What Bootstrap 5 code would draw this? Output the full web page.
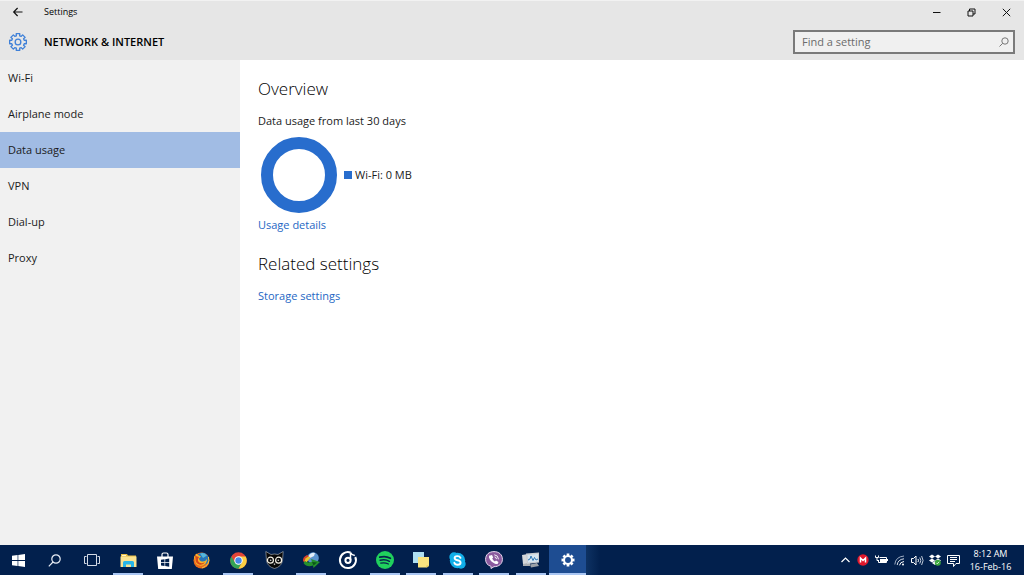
<!DOCTYPE html>
<html lang="en">
<head>
<meta charset="utf-8">
<meta name="viewport" content="width=device-width, initial-scale=1">
<title>Settings</title>
<link href="https://cdn.jsdelivr.net/npm/bootstrap@5.3.0/dist/css/bootstrap.min.css" rel="stylesheet">
<style>
  body { font-family: "Open Sans", "Noto Sans", sans-serif; font-size: 11px; line-height: 16px; color: #1b1b1b; background: #fff; }
  svg { display: block; overflow: visible; }
  button { border: 0; padding: 0; background: transparent; color: inherit; }
  .app-head { background: #e6e6e6; box-shadow: inset 0 1px #f2f2f2; }
  .caption-row { height: 24px; }
  .caption-text { font-size: 9px; color: #000; }
  .back-btn { width: 36px; height: 24px; }
  .win-btn { width: 35px; height: 24px; }
  .title-row { height: 36px; padding-right: 9px; }
  .gear-cell { width: 44px; padding-left: 9px; }
  .page-name { font-size: 11px; line-height: 16px; font-weight: 600; color: #000; }
  .search-box { width: 222px; height: 24px; border: 2px solid #7a7a7a; background: #f0f0f0; }
  .search-box input { border: 0; background: transparent; outline: 0; padding: 0 0 0 7px; color: #666; min-width: 0; }
  .search-box input::placeholder { color: #6b6b6b; opacity: 1; }
  .search-box button { width: 18px; }
  .side { width: 240px; background: #f1f1f1; }
  .side .nav-link { height: 36px; padding: 10px 8px; color: #1b1b1b; }
  .side .nav-link.active { background: #a1bce4; }
  .content { padding: 17px 18px; }
  .content h2 { font-size: 17px; line-height: 24px; font-weight: 300; margin: 0; color: #000; }
  .content section { margin-bottom: 19px; }
  .content a { color: #2567c4; text-decoration: none; }
  .ring { width: 76px; height: 76px; border: 12px solid #286dcd; margin-left: 3px; }
  .key { width: 8px; height: 8px; background: #286dcd; margin: 0 3px 0 7px; }
  .taskbar { height: 30px; background: #02204d; color: #fff; }
  .apps { display: grid; grid-template-columns: repeat(16, 1fr); width: 586px; }
  .apps button { display: flex; align-items: center; justify-content: center; border-bottom: 2px solid transparent; border-top: 2px solid transparent; }
  .apps .running { background: linear-gradient(#a9c6f3, #a9c6f3) center bottom / 30px 2px no-repeat border-box; }
  .apps .current { background: #1e4d92; border-bottom-color: #a9c6f3; border-top-color: #1e4d92; }
  .glow { width: 14px; background: linear-gradient(90deg, #0e3263, #02204d); }
  .tray button { width: 18px; display: flex; align-items: center; justify-content: center; }
  .tray .clock { width: 57px; font-size: 9px; line-height: 13px; white-space: nowrap; }
  .peek { width: 5px; }
</style>
</head>
<body class="vh-100 d-flex flex-column overflow-hidden">

<header class="app-head flex-shrink-0">
  <div class="caption-row d-flex align-items-center">
    <button class="back-btn d-flex align-items-center justify-content-center" aria-label="Back">
      <svg width="10" height="10" viewBox="0 0 10 10" fill="none" stroke="#111" stroke-width="1.2"><path d="M9.5 5H.8M4.600 1 .7 5l3.900 4"/></svg>
    </button>
    <span class="caption-text ms-2">Settings</span>
    <div class="d-flex ms-auto">
      <button class="win-btn d-flex align-items-center justify-content-center" aria-label="Minimize"><svg width="9" height="9" viewBox="0 0 9 9" stroke="#111"><path d="M1 4.500h7.500"/></svg></button>
      <button class="win-btn d-flex align-items-center justify-content-center" aria-label="Restore"><svg width="9" height="9" viewBox="0 0 9 9" fill="none" stroke="#111"><path d="M1 3h5v5H1zM2.500 3V1h5.500v5H6"/></svg></button>
      <button class="win-btn d-flex align-items-center justify-content-center" aria-label="Close"><svg width="9" height="9" viewBox="0 0 9 9" stroke="#111"><path d="m.8.8 7.400 7.400M8.200.8.8 8.200"/></svg></button>
    </div>
  </div>
  <div class="title-row d-flex align-items-center">
    <div class="gear-cell">
      <svg width="18" height="18" viewBox="-9.500 -9.500 19 19" fill="none" stroke="#3f80d8" stroke-width="1.400" stroke-linejoin="round"><path d="M6.570-1.760 8.800-1.870V1.870L6.570 1.760 5.890 3.400 7.550 4.900 4.900 7.550 3.400 5.890 1.760 6.570 1.870 8.800H-1.870L-1.760 6.570-3.400 5.890-4.900 7.550-7.550 4.900-5.890 3.400-6.570 1.760-8.800 1.870V-1.870L-6.570-1.760-5.890-3.400-7.550-4.900-4.900-7.550-3.400-5.890-1.760-6.570-1.870-8.800H1.870L1.760-6.570 3.400-5.890 4.900-7.550 7.550-4.900 5.890-3.400Z"/><circle r="3"/></svg>
    </div>
    <h1 class="page-name m-0">NETWORK &amp; INTERNET</h1>
    <form class="search-box d-flex ms-auto" role="search" onsubmit="return false">
      <input class="flex-grow-1" type="text" placeholder="Find a setting" aria-label="Find a setting">
      <button class="d-flex align-items-center justify-content-center" aria-label="Search"><svg width="10" height="10" viewBox="0 0 10 10" fill="none" stroke="#777"><circle cx="6" cy="4" r="3.200"/><path d="M3.700 6.300.5 9.500"/></svg></button>
    </form>
  </div>
</header>

<div class="d-flex flex-grow-1">
  <nav class="side flex-shrink-0" aria-label="Network and internet">
    <ul class="nav flex-column">
      <li><a class="nav-link" href="#">Wi-Fi</a></li>
      <li><a class="nav-link" href="#">Airplane mode</a></li>
      <li><a class="nav-link active" aria-current="page" href="#">Data usage</a></li>
      <li><a class="nav-link" href="#">VPN</a></li>
      <li><a class="nav-link" href="#">Dial-up</a></li>
      <li><a class="nav-link" href="#">Proxy</a></li>
    </ul>
  </nav>
  <main class="content flex-grow-1">
    <section>
      <h2>Overview</h2>
      <p class="mt-2 mb-2 pt-1">Data usage from last 30 days</p>
      <div class="d-flex align-items-center">
        <div class="ring rounded-circle"></div>
        <span class="key"></span>
        <span>Wi-Fi: 0 MB</span>
      </div>
      <div class="pt-1"><a href="#">Usage details</a></div>
    </section>
    <section>
      <h2>Related settings</h2>
      <div class="mt-2 pt-1"><a href="#">Storage settings</a></div>
    </section>
  </main>
</div>

<footer class="taskbar d-flex flex-shrink-0">
  <div class="apps flex-shrink-0">
    <button aria-label="Start"><svg width="13" height="13" viewBox="0 0 13 13" fill="#fff"><path d="M0 1.800 5.600 1v5.100H0zM6.300.9 13 0v6.100H6.300zM0 6.900h5.600V12L0 11.200zM6.300 6.900H13V13l-6.700-.9z"/></svg></button>
    <button aria-label="Search"><svg width="13" height="13" viewBox="0 0 13 13" fill="none" stroke="#e8edf5" stroke-width="1.200"><circle cx="8" cy="5" r="4.200"/><path d="M5 8 .8 12.300"/></svg></button>
    <button aria-label="Task view"><svg width="16" height="12" viewBox="0 0 16 12" fill="none" stroke="#d5dbe6"><path d="M3.500.5h9v11h-9zM2.500 2.500h-2v7h2M13.500 2.500h2v7h-2"/></svg></button>
    <button class="running" aria-label="File Explorer"><svg width="17" height="15" viewBox="0 0 17 15"><path fill="#e9bd45" d="M1 1h6l1 1.500h8V14H1z"/><path fill="#fbe391" d="M.5 3.500h16V14H.5z"/><path fill="#fff6ca" d="M2 2h4v1H2z"/><path fill="#29b6e8" d="M3 14V9.500Q3 8 4.500 8h8Q14 8 14 9.500V14h-3v-2.500H6V14z"/></svg></button>
    <button aria-label="Store"><svg width="16" height="17" viewBox="0 0 16 17"><path fill="none" stroke="#fff" stroke-width="1.200" d="M5 5V2.500Q5 1 6.500 1h3Q11 1 11 2.500V5"/><path fill="#fff" d="M0 4.500h16L14.800 17H1.200z"/><path fill="#02204d" d="m4 7.800 3.500-.5v3H4zm4.200-.6 4-.6v3.700h-4zM4 11h3.500v3L4 13.500zm4.200 0h4v3.700l-4-.6z"/></svg></button>
    <button aria-label="Firefox"><svg width="17" height="17" viewBox="0 0 17 17"><circle cx="8.500" cy="8.500" r="8" fill="#e96a1c"/><path fill="#2675b8" d="M4 3.500Q8-1 13 2q4 3 2.500 8-2 3-6 2.500z"/><path fill="#55b7db" d="M7 1.500q4-1.500 7 2l-4 2.500z"/><path fill="#f9b52a" d="M1 5q1-3 3-3.500 0 1.500 2 2l2 1-2 2q0 2.500 3 3 3 .5 5-2.500 0 5-4.500 6.500Q3 14.500 2 9z"/><path fill="#d9481a" d="M2 2.500q1 2 4 2.500l-1 2q-.5 3 2.500 4 3 .5 4.500-1-2 3.800-6 2.500Q2 10.500 2.500 7z"/><path fill="none" stroke="#f8c83c" d="M15.500 5Q17.500 13 9 16"/></svg></button>
    <button class="running" aria-label="Chrome"><svg width="17" height="17" viewBox="-8.500 -8.500 17 17"><circle r="8.300" fill="#e24538"/><path fill="#34a455" d="M-7.200-4.100A8.300 8.300 0 0 0 0 8.300L3.500 2-3.500 2z"/><path fill="#fbd043" d="M0 8.300A8.300 8.300 0 0 0 7.300-3.900H0L3.500 2z"/><circle r="4.200" fill="#fff"/><circle r="3.200" fill="#4588e8"/></svg></button>
    <button aria-label="Cat app"><svg width="19" height="18" viewBox="0 0 19 18"><path fill="#080808" stroke="#b9bcbf" stroke-width=".6" d="M.8.500 6 3.500q3.500-1 7 0L18.200.5l-.7 9.200q-1 6-8 7.800-7-1.800-8-7.800z"/><circle cx="5.400" cy="9.200" r="3" fill="#080808" stroke="#f4f1e6" stroke-width="1.200"/><circle cx="13.600" cy="9.200" r="3" fill="#080808" stroke="#f4f1e6" stroke-width="1.200"/><circle cx="5.700" cy="9.200" r=".8" fill="#ddd"/><circle cx="13.300" cy="9.200" r=".8" fill="#ddd"/><path fill="#c9c9c4" d="m8.500 13 1-.7 1 .7-1 1.200z"/></svg></button>
    <button class="running" aria-label="Download manager"><svg width="18" height="17" viewBox="0 0 18 17"><circle cx="11" cy="6" r="5.800" fill="#5b93cf"/><path fill="#e3eefa" d="M6.500 4.500q2-4.500 6.500-3.500l-1 3-4 2z"/><path fill="#d6412b" d="M1 9q-.5-4 4-6l2 1-3 3-1 4z"/><path fill="#e8c52c" d="M2.500 9.500q.5-4 4.500-5l1.500 1-4 5z"/><path fill="#25912d" d="M3 9q3 2.500 7 .5L9 7l9 3-6.500 6-.5-2.500Q5 16 1.500 11z"/><path fill="#0b551a" d="m10 10 5 .5-3.500 3z"/></svg></button>
    <button aria-label="Groove Music"><svg width="18" height="18" viewBox="0 0 18 18" fill="none" stroke="#fff" stroke-width="2"><path d="M11.500 1.500A8 8 0 1 0 16.300 6"/><circle cx="9" cy="9.300" r="2.600"/><path stroke-width="1.500" d="M11.500 9V1.500q1 2.500 4.300 3"/></svg></button>
    <button class="running" aria-label="Spotify"><svg width="18" height="18" viewBox="0 0 18 18"><circle cx="9" cy="9" r="9" fill="#20d05d"/><path fill="none" stroke="#06244b" stroke-linecap="round" stroke-width="1.800" d="M3.800 6.200q5.700-1.600 10.600 1"/><path fill="none" stroke="#06244b" stroke-linecap="round" stroke-width="1.500" d="M4.200 9.300q5-1.300 9.200 1"/><path fill="none" stroke="#06244b" stroke-linecap="round" stroke-width="1.200" d="M4.700 12.200q4-1 7.700.8"/></svg></button>
    <button class="running" aria-label="Sticky notes"><svg width="16" height="16" viewBox="0 0 16 16"><path fill="#aedff2" d="M0 0h11v11H0z"/><path fill="#fbe47f" d="M5 5h11v9l-2 1.500H5z"/><path fill="#dcbd4b" d="M13.500 15.500V13.500H16z"/></svg></button>
    <button class="running" aria-label="Skype"><svg width="17" height="17" viewBox="0 0 17 17"><circle cx="5" cy="5" r="4.700" fill="#11aee8"/><circle cx="12" cy="12" r="4.700" fill="#11aee8"/><circle cx="8.500" cy="8.500" r="7.700" fill="#11aee8"/><path fill="none" stroke="#fff" stroke-width="1.900" stroke-linecap="round" d="M11.500 5.800Q10.700 4 8.300 4.100q-2.700.2-2.700 2 0 1.600 3 2.200 3 .6 3 2.400 0 2-3 2.100-2.600 0-3.300-2"/></svg></button>
    <button class="running" aria-label="Viber"><svg width="18" height="18" viewBox="0 0 18 18"><path fill="#8b5b9e" stroke="#e8daee" d="M9 .6c5 0 8.400 3 8.400 7.700 0 4.500-3.400 7.400-8.400 7.400l-3 1.800v-2.200C2.500 14.300.6 12 .6 8.300.6 3.600 4 .6 9 .6z"/><path fill="#fff" d="M5.300 4.500 7 4l1.200 2.500-1 1q.8 2 2.700 3l1.100-1 2.500 1.500-.7 1.700q-1 .8-2.800 0-4.600-2-6-6.200-.1-1.300.3-2z"/><path fill="none" stroke="#fff" stroke-width=".9" d="M9.300 3.800q4 .4 4.200 4.500M9.600 5.900q1.700.2 1.900 2.200"/></svg></button>
    <button class="running" aria-label="Resource monitor"><svg width="18" height="16" viewBox="0 0 18 16"><path fill="#a9adb1" d="M1 5h7v9H1z"/><path fill="#d5d7d9" d="M0 3 6 2v9l-5 1z"/><path fill="#c9cdd1" d="M4 1.500 17 .5v10L5 12z"/><path fill="#d5e6f2" d="M5.500 3 16 2v7.500L6 10.500z"/><path fill="none" stroke="#317ab8" d="m6 8 2-1 1-3 2 4.500 1.500-3L14 8l2-1"/><path fill="#9ba1a8" d="M8 12.500 15 11l2 3-8 1.500z"/></svg></button>
    <button class="current" aria-label="Settings"><svg width="14" height="14" viewBox="-9.500 -9.500 19 19"><path fill="#fff" fill-rule="evenodd" d="M6.570-1.760 8.800-1.870V1.870L6.570 1.760 5.890 3.400 7.550 4.900 4.900 7.550 3.400 5.890 1.760 6.570 1.870 8.800H-1.870L-1.760 6.570-3.400 5.890-4.900 7.550-7.550 4.900-5.890 3.400-6.570 1.760-8.800 1.870V-1.870L-6.570-1.760-5.890-3.400-7.550-4.900-4.900-7.550-3.400-5.890-1.760-6.570-1.870-8.800H1.870L1.760-6.570 3.400-5.890 4.900-7.550 7.550-4.900 5.890-3.400ZM4 0A4 4 0 1 0-4 0 4 4 0 1 0 4 0Z"/></svg></button>
  </div>
  <div class="glow"></div>
  <div class="tray d-flex ms-auto">
    <button aria-label="Show hidden icons"><svg width="9" height="6" viewBox="0 0 9 6" fill="none" stroke="#fff" stroke-width="1.200"><path d="M.5 5 4.500 1l4 4"/></svg></button>
    <button aria-label="MEGA"><svg width="12" height="12" viewBox="0 0 12 12"><circle cx="6" cy="6" r="5.700" fill="#e0172b"/><path fill="none" stroke="#fff" stroke-width="1.500" d="M3.500 8.500V4L6 6.500 8.500 4v4.500"/></svg></button>
    <button aria-label="Battery"><svg width="13" height="10" viewBox="0 0 13 10"><path fill="none" stroke="#fff" d="M4.500 2.500h7v5h-8V5M12.500 4v2M.5.500v2h3v-2M2 3v2.500h2"/><path fill="#fff" d="M5 4h6v3H5z"/></svg></button>
    <button aria-label="Wi-Fi"><svg width="11" height="11" viewBox="0 0 11 11" fill="none" stroke="#9fadc4"><path d="M.8 9.500Q1.500 1.800 10 1"/><path d="M3.200 10Q3.800 4.500 10 3.800" stroke="#d9e0eb"/><path d="M5.500 10.300Q6 7 10 6.500" stroke="#fff"/><circle cx="9" cy="9.500" r="1" fill="#fff" stroke="none"/></svg></button>
    <button aria-label="Volume"><svg width="13" height="11" viewBox="0 0 13 11" fill="none" stroke="#fff"><path d="M.5 3.500H2.500L5 1v9L2.500 7.500h-2zM7 4q1 1.500 0 3"/><path stroke="#c3ccda" d="M8.800 2.500q2 3 0 6M10.600 1q3 4.500 0 9"/></svg></button>
    <button aria-label="Dropbox"><svg width="12" height="12" viewBox="0 0 12 12"><path fill="#fff" d="m3 .5 3 2-3 2-3-2zm6 0 3 2-3 2-3-2zM3 4.500l3 2-3 2-3-2zm6 0 3 2-3 2-3-2zM3 9l3-2 3 2-3 2z"/><circle cx="8.800" cy="8.800" r="3" fill="#3aa63d"/><path fill="none" stroke="#fff" stroke-width=".8" d="m7.300 8.800 1 1 1.800-2"/></svg></button>
    <button aria-label="Notifications"><svg width="13" height="13" viewBox="0 0 13 13" fill="none" stroke="#fff"><path d="M.5 1.500h12v8H9l-2.500 3v-3h-6zM3 3.500h7M3 5.500h7M3 7.500h5"/></svg></button>
    <button class="clock flex-column">
      <span>8:12 AM</span>
      <span>16-Feb-16</span>
    </button>
    <div class="peek"></div>
  </div>
</footer>

<script src="https://cdn.jsdelivr.net/npm/bootstrap@5.3.0/dist/js/bootstrap.bundle.min.js"></script>
</body>
</html>
